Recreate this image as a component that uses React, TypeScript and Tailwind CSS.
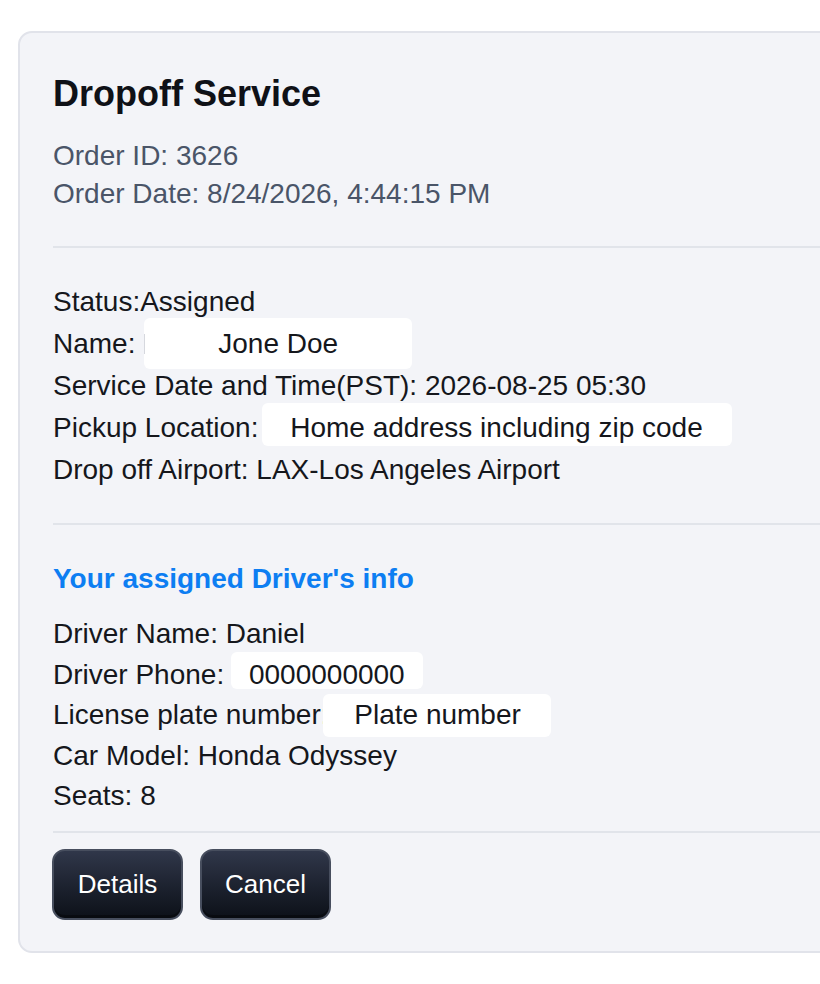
import React from "react";

function Redact({
  text,
  ml,
  box,
  sliver,
}: {
  text: string;
  ml: string;
  box: string;
  sliver?: boolean;
}) {
  return (
    <span className={`relative inline-block ${ml}`}>
      <span className={`absolute bg-white rounded-[6px] ${box}`} />
      {sliver ? (
        <span className="absolute left-[-74px] top-[11px] h-[20px] w-[1px] bg-[#d6d8de]" />
      ) : null}
      <span className="relative">{text}</span>
    </span>
  );
}

export default function App() {
  return (
    <div className="w-[820px] h-[984px] overflow-hidden bg-white pt-[31px] pl-[18px] font-['Liberation_Sans',Arial,Helvetica,sans-serif]">
      <div className="w-[900px] rounded-[14px] border-2 border-[#e1e3ea] bg-[#f3f4f8] pl-[33px] pr-[35px] pt-[39px] pb-[31px] text-[#15171c]">
        <h1 className="text-[36px] font-bold leading-[43px] text-[#0f1117]">Dropoff Service</h1>
        <div className="mt-[22px] text-[28px] leading-[38px] text-[#4a5568]">
          <div>Order ID: 3626</div>
          <div>Order Date: 8/24/2026, 4:44:15 PM</div>
        </div>

        <div className="mt-[33px] h-[2px] bg-[#e1e4ea]" />

        <div className="mt-[33px] text-[28px] leading-[42px] whitespace-pre">
          <div>Status:Assigned</div>
          <div>
            {"Name: "}
            <Redact
              text="Jone Doe"
              ml="ml-[75px]"
              box="left-[-74px] right-[-74px] top-[-5px] bottom-[-4px]"
              sliver
            />
          </div>
          <div>Service Date and Time(PST): 2026-08-25 05:30</div>
          <div>
            {"Pickup Location: "}
            <Redact
              text="Home address including zip code"
              ml="ml-[24px]"
              box="left-[-28px] right-[-29px] top-[-4px] bottom-[3px]"
            />
          </div>
          <div>Drop off Airport: LAX-Los Angeles Airport</div>
        </div>

        <div className="mt-[32px] h-[2px] bg-[#e1e4ea]" />

        <h2 className="mt-[37px] text-[28px] font-bold leading-[34px] text-[#0d7ef2]">
          Your assigned Driver's info
        </h2>

        <div className="mt-[18px] text-[28px] leading-[40.5px] whitespace-pre">
          <div>Driver Name: Daniel</div>
          <div>
            {"Driver Phone: "}
            <Redact
              text="0000000000"
              ml="ml-[17px]"
              box="left-[-18px] right-[-18px] top-[-3px] bottom-[6px]"
            />
          </div>
          <div>
            {"License plate number: "}
            <Redact
              text="Plate number"
              ml="ml-[18px]"
              box="left-[-31px] right-[-30px] top-[-1px] bottom-[-1px]"
            />
          </div>
          <div>Car Model: Honda Odyssey</div>
          <div>Seats: 8</div>
        </div>

        <div className="mt-[14px] h-[2px] bg-[#e1e4ea]" />

        <div className="mt-[16px] -ml-px flex gap-[17px]">
          <button className="flex h-[71px] w-[131px] items-center justify-center rounded-[13px] border-2 border-[#474e5e] bg-gradient-to-b from-[#30374a] to-[#0d1119] text-[26px] text-white shadow-[inset_0_-3px_0_rgba(0,0,0,0.35)]">
            Details
          </button>
          <button className="flex h-[71px] w-[131px] items-center justify-center rounded-[13px] border-2 border-[#474e5e] bg-gradient-to-b from-[#30374a] to-[#0d1119] text-[26px] text-white shadow-[inset_0_-3px_0_rgba(0,0,0,0.35)]">
            Cancel
          </button>
        </div>
      </div>
    </div>
  );
}
